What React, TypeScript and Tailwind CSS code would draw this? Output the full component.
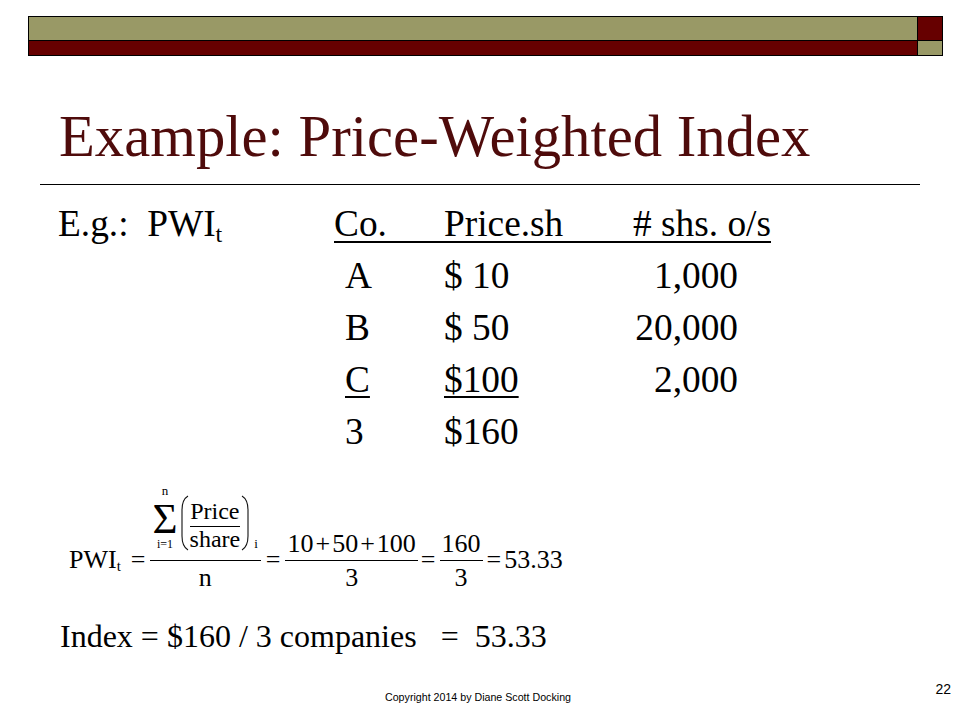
import React from "react";

function Paren({ right = false }: { right?: boolean }) {
  return (
    <svg width="9" height="56" viewBox="0 0 9 56" className="shrink-0">
      {right ? (
        <path d="M1 1 C6 4 7 9 7 15 L7 41 C7 47 6 52 1 55" stroke="#111" strokeWidth="1.1" fill="none" />
      ) : (
        <path d="M8 1 C3 4 2 9 2 15 L2 41 C2 47 3 52 8 55" stroke="#111" strokeWidth="1.1" fill="none" />
      )}
    </svg>
  );
}

function SmallFrac({ num, den }: { num: React.ReactNode; den: React.ReactNode }) {
  return (
    <div className="mt-[51px] flex flex-col items-center">
      <div className="px-[2px] text-[26px] leading-[25px] whitespace-pre">{num}</div>
      <div className="mt-[4px] h-px w-full bg-black" />
      <div className="mt-[4px] text-[26px] leading-[25px]">{den}</div>
    </div>
  );
}

function Eq({ className = "" }: { className?: string }) {
  return <div className={"mt-[67px] text-[26px] leading-[25px] " + className}>=</div>;
}

export default function App() {
  return (
    <div className="w-[960px] h-[720px] overflow-hidden bg-white font-['Liberation_Serif','Times_New_Roman',serif] text-black">
      {/* top banner */}
      <div className="ml-[28px] mt-[16px] grid w-[915px] grid-cols-[1fr_24px] grid-rows-[23px_14px] gap-px border border-black bg-black">
        <div className="bg-[#999966]" />
        <div className="bg-[#660000]" />
        <div className="bg-[#660000]" />
        <div className="bg-[#999966]" />
      </div>

      {/* title */}
      <h1 className="ml-[59px] mt-[52px] text-[58.7px] leading-none text-[#4f0b0b]">
        Example: Price-Weighted Index
      </h1>

      {/* rule */}
      <div className="ml-[40px] mt-[17px] h-px w-[880px] bg-black" />

      {/* table */}
      <div className="mt-[13px] pl-[58px] text-[37.33px]">
        <div className="flex h-[52px] leading-[52px]">
          <div className="w-[276px] whitespace-pre">
            E.g.:  PWI<sub className="text-[24px]">t</sub>
          </div>
          <div className="mt-[9px] flex self-start border-b-2 border-black leading-[34px]">
            <div className="w-[110px]">Co.</div>
            <div className="w-[189px]">Price.sh</div>
            <div className="whitespace-pre"># shs. o/s</div>
          </div>
        </div>
        {[
          { co: "A", price: "$ 10", sh: "1,000", u: false },
          { co: "B", price: "$ 50", sh: "20,000", u: false },
          { co: "C", price: "$100", sh: "2,000", u: true },
          { co: "3", price: "$160", sh: "", u: false },
        ].map((r) => (
          <div key={r.co} className="flex h-[52px] pl-[276px] leading-[52px]">
            <div className="w-[110px] pl-[11px]">
              <span className={r.u ? "underline decoration-2 underline-offset-[4px]" : ""}>{r.co}</span>
            </div>
            <div className="w-[189px] whitespace-pre">
              <span className={r.u ? "underline decoration-2 underline-offset-[4px]" : ""}>{r.price}</span>
            </div>
            <div className="w-[105px] text-right">{r.sh}</div>
          </div>
        ))}
      </div>

      {/* formula */}
      <div className="mt-[22px] flex h-[130px] items-start pl-[69px]">
        <div className="mt-[67px] text-[26px] leading-[25px] whitespace-pre">
          PWI<sub className="text-[15px]">t</sub>
        </div>
        <Eq className="ml-[10px]" />
        {/* big fraction */}
        <div className="ml-[4px] mt-[13px] flex flex-col items-center">
          <div className="flex h-[60px] items-start px-[3px]">
            <div className="-mt-[9px] flex flex-col items-center">
              <div className="text-[13px] leading-[13px]">n</div>
              <div className="mt-[7px] text-[43px] leading-[30px]">Σ</div>
              <div className="mt-[4px] text-[12px] leading-[12px]">i=1</div>
            </div>
            <div className="ml-[2px] mt-[2px] flex items-center">
              <Paren />
              <div className="mx-[1px] flex flex-col items-center pt-[4px]">
                <div className="text-[24px] leading-[24px]">Price</div>
                <div className="mt-[3px] h-px w-full bg-black" />
                <div className="text-[24px] leading-[24px]">share</div>
              </div>
              <Paren right />
            </div>
            <div className="ml-[4px] mt-[44px] text-[13px] leading-[13px]">i</div>
          </div>
          <div className="mt-[7px] h-px w-full bg-black" />
          <div className="mt-[4px] text-[26px] leading-[25px]">n</div>
        </div>
        <Eq className="ml-[5px]" />
        <div className="ml-[5px]">
          <SmallFrac
            num={
              <>
                10<span className="mx-[2px]">+</span>50<span className="mx-[2px]">+</span>100
              </>
            }
            den="3"
          />
        </div>
        <Eq className="ml-[3px]" />
        <div className="ml-[4px]">
          <SmallFrac num="160" den="3" />
        </div>
        <Eq className="ml-[4px]" />
        <div className="ml-[3px] mt-[67px] text-[26px] leading-[25px]">53.33</div>
      </div>

      {/* index line */}
      <div className="ml-[60px] mt-[10px] whitespace-pre text-[32px] leading-none">
        Index = $160 / 3 companies   =  53.33
      </div>

      {/* footer */}
      <div className="mt-[30px] flex items-start font-['Liberation_Sans',Arial,sans-serif]">
        <div className="ml-[385px] mt-[10px] text-[10.67px] leading-none">
          Copyright 2014 by Diane Scott Docking
        </div>
        <div className="ml-auto mr-[9px] text-[14px] leading-none">22</div>
      </div>
    </div>
  );
}
